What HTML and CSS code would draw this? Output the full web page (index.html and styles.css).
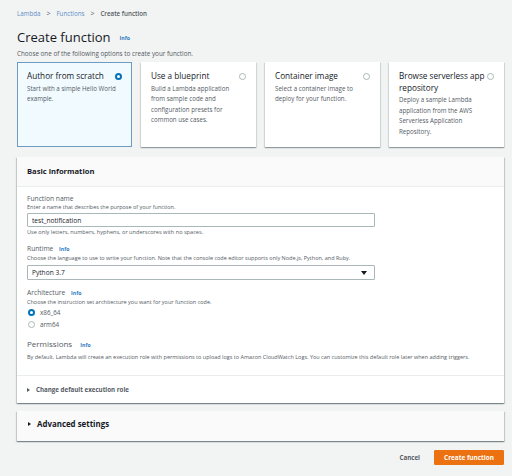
FILE: index.html
```html
<!DOCTYPE html>
<html>
<head>
<meta charset="utf-8">
<link rel="stylesheet" href="styles.css">
</head>
<body>
<div class="page">
  <nav class="crumbs">
    <a class="crumb-link">Lambda</a>
    <span class="sep">&gt;</span>
    <a class="crumb-link">Functions</a>
    <span class="sep">&gt;</span>
    <span class="crumb-current">Create function</span>
  </nav>
  <h1 class="title">Create function <span class="info">Info</span></h1>
  <p class="subtitle">Choose one of the following options to create your function.</p>

  <div class="cards">
    <div class="card selected">
      <div class="card-head"><span class="card-title">Author from scratch</span><span class="radio checked"></span></div>
      <p class="card-desc">Start with a simple Hello World example.</p>
    </div>
    <div class="card">
      <div class="card-head"><span class="card-title">Use a blueprint</span><span class="radio"></span></div>
      <p class="card-desc">Build a Lambda application from sample code and configuration presets for common use cases.</p>
    </div>
    <div class="card">
      <div class="card-head"><span class="card-title">Container image</span><span class="radio"></span></div>
      <p class="card-desc">Select a container image to deploy for your function.</p>
    </div>
    <div class="card">
      <div class="card-head"><span class="card-title">Browse serverless app repository</span><span class="radio"></span></div>
      <p class="card-desc">Deploy a sample Lambda application from the AWS Serverless Application Repository.</p>
    </div>
  </div>

  <section class="panel">
    <header class="panel-head">Basic information</header>
    <div class="panel-body">
      <div class="field">
        <div class="label">Function name</div>
        <div class="desc">Enter a name that describes the purpose of your function.</div>
        <div class="input">test_notification</div>
        <div class="hint">Use only letters, numbers, hyphens, or underscores with no spaces.</div>
      </div>
      <div class="field">
        <div class="label">Runtime <span class="info">Info</span></div>
        <div class="desc">Choose the language to use to write your function. Note that the console code editor supports only Node.js, Python, and Ruby.</div>
        <div class="input select">Python 3.7<span class="caret"></span></div>
      </div>
      <div class="field">
        <div class="label">Architecture <span class="info">Info</span></div>
        <div class="desc">Choose the instruction set architecture you want for your function code.</div>
        <div class="radio-row"><span class="radio checked"></span>x86_64</div>
        <div class="radio-row"><span class="radio"></span>arm64</div>
      </div>
      <div class="perm">
        <div class="perm-title">Permissions <span class="info">Info</span></div>
        <div class="desc">By default, Lambda will create an execution role with permissions to upload logs to Amazon CloudWatch Logs. You can customize this default role later when adding triggers.</div>
      </div>
    </div>
    <div class="expander"><span class="tri"></span>Change default execution role</div>
  </section>

  <section class="panel adv">
    <div class="adv-row"><span class="tri dark"></span>Advanced settings</div>
  </section>

  <div class="actions">
    <span class="cancel">Cancel</span>
    <span class="primary">Create function</span>
  </div>
</div>
</body>
</html>
```
FILE: styles.css
```css
* { box-sizing: border-box; }
html, body { margin: 0; padding: 0; }
body {
  background: #f2f3f3;
  font-family: "Open Sans", "Liberation Sans", sans-serif;
  color: #16191f;
  width: 512px;
  height: 476px;
  overflow: hidden;
}
.page { padding: 10px 8px 0 17px; }

.crumbs { font-size: 6.2px; line-height: 8px; display: flex; align-items: center; }
.crumb-link { color: #5f8fc7; }
.sep { color: #545b64; margin: 0 6px; font-size: 7px; }
.crumb-current { color: #545b64; font-weight: 600; }

.title {
  margin: 8px 0 0 0;
  font-size: 13px;
  line-height: 18px;
  font-weight: 400;
  color: #16191f;
  display: flex;
  align-items: center;
}
.info { color: #2f7cc0; font-size: 5.2px; font-weight: 700; }
.title .info { margin-left: 9px; margin-top: 3px; }
.subtitle { margin: 3px 0 0; font-size: 6.3px; line-height: 8px; color: #545b64; }

.cards { margin-top: 4px; display: grid; grid-template-columns: repeat(4, 1fr); gap: 9px; height: 85px; }
.card {
  background: #fff;
  padding: 8px 10px 0 10px;
  box-shadow: 0 1px 1px 0 rgba(0,28,36,.25), 1px 1px 1px 0 rgba(0,28,36,.1), -1px 1px 1px 0 rgba(0,28,36,.1);
}
.card.selected { background: #f1faff; border: 1px solid #6f9ac4; padding: 7px 9px 0 9px; box-shadow: none; }
.card-head { display: flex; justify-content: space-between; align-items: flex-start; }
.card-title { font-size: 8.2px; line-height: 11.5px; color: #16191f; }
.card-head .radio { margin-top: 2.5px; flex: none; margin-left: 2px; }
.card-desc { margin: 2px 0 0; font-size: 6.2px; line-height: 10.5px; color: #545b64; padding-right: 2px; }

.radio {
  display: inline-block;
  width: 7px;
  height: 7px;
  border-radius: 50%;
  border: 1px solid #aab7b8;
  background: #fff;
}
.radio.checked { border: 2px solid #0073bb; }

.panel {
  margin-top: 10px;
  background: #fff;
  box-shadow: 0 1px 1px 0 rgba(0,28,36,.3), 1px 1px 1px 0 rgba(0,28,36,.15), -1px 1px 1px 0 rgba(0,28,36,.15);
}
.panel-head {
  background: #fafafa;
  border-bottom: 1px solid #eaeded;
  height: 30px;
  padding: 0 10px 2px;
  display: flex;
  align-items: center;
  font-size: 7.6px;
  font-weight: 700;
  color: #16191f;
}
.panel-body { padding: 7px 10px 14px 10px; border-bottom: 1px solid #eaeded; }
.field { margin-bottom: 8px; }
.label { font-size: 6.7px; line-height: 9px; color: #545b64; }
.label .info { margin-left: 4px; }
.desc { font-size: 5.5px; line-height: 8px; color: #545b64; white-space: nowrap; }
.input {
  margin-top: 2px;
  width: 348px;
  height: 14px;
  border: 1px solid #aab7b8;
  border-radius: 1px;
  padding: 0 4px;
  display: flex;
  align-items: center;
  font-size: 6.6px;
  color: #16191f;
}
.select { margin-top: 3px; height: 15px; justify-content: space-between; }
.caret {
  width: 0; height: 0;
  border-left: 3px solid transparent;
  border-right: 3px solid transparent;
  border-top: 4px solid #16191f;
  margin-right: 3px;
}
.hint { margin-top: 1px; font-size: 5.6px; line-height: 8px; color: #545b64; }
.radio-row { display: flex; align-items: center; gap: 5px; height: 12px; font-size: 6.3px; color: #545b64; padding-left: 1px; }
.perm { margin-top: 3px; }
.perm-title { font-size: 8px; line-height: 11px; color: #545b64; }
.perm-title .info { margin-left: 6px; }
.perm .desc { margin-top: 2px; }

.expander {
  height: 27px;
  display: flex;
  align-items: center;
  padding-left: 10px;
  font-size: 6.2px;
  font-weight: 700;
  color: #545b64;
}
.tri {
  width: 0; height: 0;
  border-top: 2.5px solid transparent;
  border-bottom: 2.5px solid transparent;
  border-left: 3.5px solid #545b64;
  margin-right: 6px;
}
.tri.dark { border-left-color: #16191f; }

.adv { margin-top: 8px; background: #fafafa; }
.adv-row {
  height: 30px;
  display: flex;
  align-items: center;
  padding: 0 0 4px 11px;
  font-size: 7.9px;
  font-weight: 700;
  color: #16191f;
}

.actions { margin-top: 9px; display: flex; justify-content: flex-end; align-items: center; }
.cancel { font-size: 6.2px; font-weight: 700; color: #545b64; margin-right: 14px; }
.primary {
  width: 70px;
  height: 15px;
  background: #ec7211;
  border: 1px solid #ec7211;
  color: #fff;
  font-size: 6.4px;
  font-weight: 700;
  display: flex;
  align-items: center;
  justify-content: center;
  border-radius: 1px;
}
```
